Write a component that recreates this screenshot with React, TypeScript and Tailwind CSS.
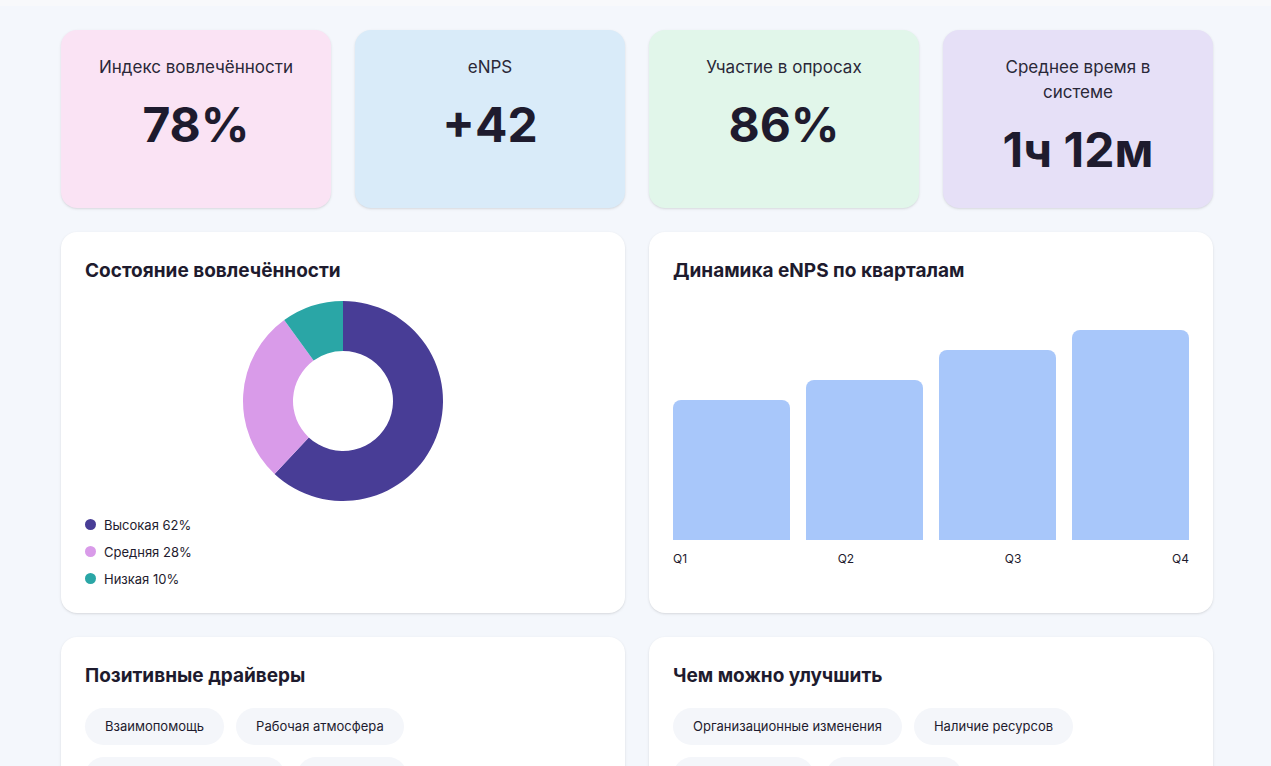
import React from "react";

const stats = [
  { t: "Индекс вовлечённости", v: "78%", bg: "bg-[#fae3f4]" },
  { t: "eNPS", v: "+42", bg: "bg-[#d9ebf9]" },
  { t: "Участие в опросах", v: "86%", bg: "bg-[#e1f6ea]" },
  { t: "Среднее время в системе", v: "1ч 12м", bg: "bg-[#e6e0f7]" },
];

function arc(cx: number, cy: number, r1: number, r0: number, a0: number, a1: number) {
  const p = (r: number, a: number) => [cx + r * Math.sin(a), cy - r * Math.cos(a)];
  const large = a1 - a0 > Math.PI ? 1 : 0;
  const [x1, y1] = p(r1, a0), [x2, y2] = p(r1, a1), [x3, y3] = p(r0, a1), [x4, y4] = p(r0, a0);
  return `M${x1} ${y1}A${r1} ${r1} 0 ${large} 1 ${x2} ${y2}L${x3} ${y3}A${r0} ${r0} 0 ${large} 0 ${x4} ${y4}Z`;
}

const segs = [
  { v: 62, c: "#483d96", l: "Высокая 62%" },
  { v: 28, c: "#d99be9", l: "Средняя 28%" },
  { v: 10, c: "#2aa6a6", l: "Низкая 10%" },
];

function Chip({ t }: { t: string }) {
  return <span className="rounded-full bg-[#f4f6fa] px-5 py-[9px] text-[13px] text-[#1e1b2e]">{t}</span>;
}

export default function App() {
  let acc = 0;
  return (
    <div className="min-h-screen bg-[#f4f7fc] text-[#1e1b2e]" style={{ fontFamily: "Inter, 'Noto Sans', sans-serif" }}>
      <div className="h-[6px] bg-[#f8f9fb]" />
      <div className="ml-[61px] w-[1152px] pt-6 flex flex-col gap-6">
        <div className="grid grid-cols-4 gap-6">
          {stats.map((s) => (
            <div key={s.t} className={`${s.bg} h-[178px] rounded-2xl shadow-sm pt-[25px] px-8 text-center`}>
              <div className="text-[17px] leading-[25px] text-[#2a2838]">{s.t}</div>
              <div className="mt-[15px] text-[48px] font-bold leading-[60px] text-[#1e1b2e]">{s.v}</div>
            </div>
          ))}
        </div>
        <div className="grid grid-cols-2 gap-6">
          <div className="h-[381px] rounded-2xl bg-white shadow-sm px-6 pt-[25px]">
            <div className="text-[19px] font-bold">Состояние вовлечённости</div>
            <div className="flex justify-center mt-[14px]">
              <svg width="202" height="202" viewBox="0 0 202 202">
                {segs.map((s) => {
                  const a0 = (acc / 100) * 2 * Math.PI;
                  acc += s.v;
                  const a1 = (acc / 100) * 2 * Math.PI;
                  return <path key={s.l} d={arc(101, 101, 100, 50, a0, a1)} fill={s.c} />;
                })}
              </svg>
            </div>
            <div className="mt-[14px] flex flex-col gap-[9px]">
              {segs.map((s) => (
                <div key={s.l} className="flex items-center gap-2 text-[13px] leading-[18px]">
                  <span className="h-[11px] w-[11px] rounded-full" style={{ background: s.c }} />
                  {s.l}
                </div>
              ))}
            </div>
          </div>
          <div className="h-[381px] rounded-2xl bg-white shadow-sm px-6 pt-[25px]">
            <div className="text-[19px] font-bold">Динамика eNPS по кварталам</div>
            <div className="mt-[42px] h-[212px] flex items-end gap-4">
              {[140, 160, 190, 210].map((h, i) => (
                <div key={i} className="flex-1 rounded-t-lg bg-[#a8c7fa]" style={{ height: h }} />
              ))}
            </div>
            <div className="mt-[10px] flex justify-between text-[12px]">
              <span>Q1</span><span>Q2</span><span>Q3</span><span>Q4</span>
            </div>
          </div>
        </div>
        <div className="grid grid-cols-2 gap-6">
          <div className="h-[200px] rounded-2xl bg-white shadow-sm px-6 pt-[25px]">
            <div className="text-[19px] font-bold">Позитивные драйверы</div>
            <div className="mt-[17px] flex flex-wrap gap-x-3 gap-y-[12px]">
              <Chip t="Взаимопомощь" /><Chip t="Рабочая атмосфера" />
              <Chip t="Профессиональный рост" /><Chip t="Признание" />
            </div>
          </div>
          <div className="h-[200px] rounded-2xl bg-white shadow-sm px-6 pt-[25px]">
            <div className="text-[19px] font-bold">Чем можно улучшить</div>
            <div className="mt-[17px] flex flex-wrap gap-x-3 gap-y-[12px]">
              <Chip t="Организационные изменения" /><Chip t="Наличие ресурсов" />
              <Chip t="Обратная связь" /><Chip t="Баланс работы" />
            </div>
          </div>
        </div>
      </div>
    </div>
  );
}
